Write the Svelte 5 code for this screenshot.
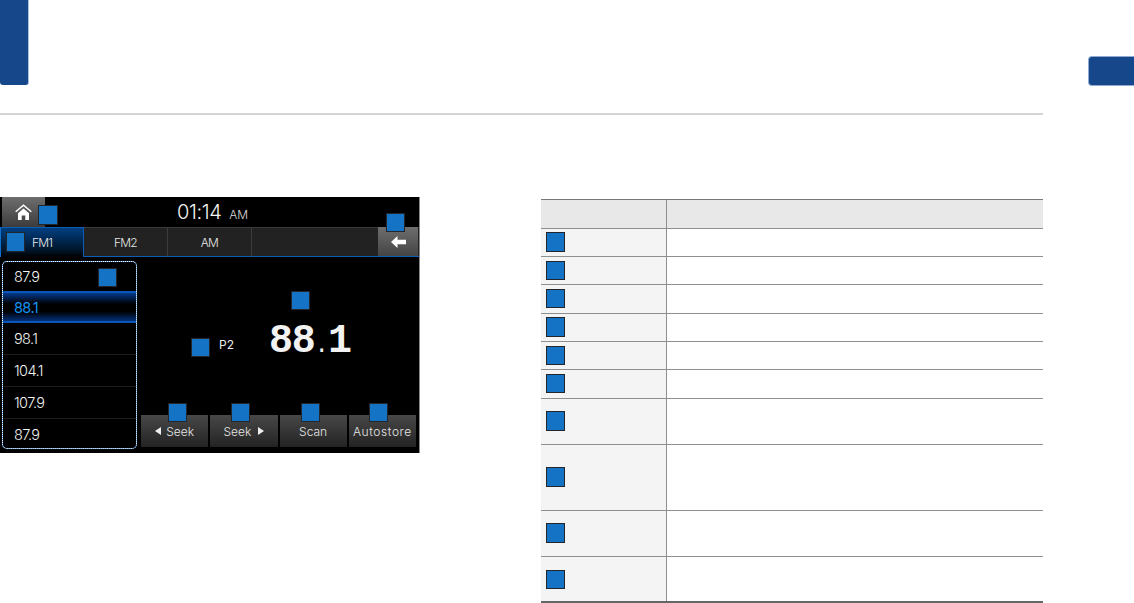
<script>
  const presets = [
    { f: '87.9', cls: 'first' },
    { f: '88.1', cls: 'sel' },
    { f: '98.1', cls: '' },
    { f: '104.1', cls: '' },
    { f: '107.9', cls: '' },
    { f: '87.9', cls: 'last' }
  ];
  const rows = [
    { h: 'r28', b: '' }, { h: 'r28', b: 'short' }, { h: 'r29', b: 'short' },
    { h: 'r28', b: '' }, { h: 'r28', b: 'short' }, { h: 'r29', b: 'short' },
    { h: 'r46', b: '' }, { h: 'r66', b: '' }, { h: 'r46', b: '' }, { h: 'r44', b: 'short' }
  ];
</script>

<div class="page">
  <header class="head">
    <div class="chapter"></div>
  </header>
  <div class="sidetab"></div>

  <main class="content">
    <section class="screen">
      <div class="topbar">
        <div class="home">
          <svg width="17" height="16" viewBox="0 0 17 16">
            <path d="M.7 7.800 8.500 1.200l7.800 6.600" fill="none" stroke="#fff" stroke-width="1.500"/>
            <path d="M3 9.300 8.500 4.600 14 9.300V16h-3.700v-4.500H6.700V16H3z" fill="#fff"/>
          </svg>
        </div>
        <div class="clock"><span class="time">01:14</span><span class="ampm">AM</span></div>
      </div>

      <div class="tabs">
        <div class="tab active">FM1</div>
        <div class="tab">FM2</div>
        <div class="tab">AM</div>
        <div class="tab spacer"></div>
        <div class="back">
          <svg width="15" height="12" viewBox="0 0 15 12">
            <path d="M0 6 6.500 0v3.800H15v4.400H6.500V12z" fill="#fff"/>
          </svg>
        </div>
      </div>

      <div class="main">
        <ul class="list">
          {#each presets as p}
            <li class={p.cls}>{p.f}</li>
          {/each}
        </ul>
        <div class="panel">
          <div class="tuned">
            <span class="preset">P2</span>
            <span class="freq">88<span class="dot">.</span>1</span>
          </div>
          <div class="buttons">
            <div class="btn">
              <svg width="6" height="8" viewBox="0 0 6 8"><path d="M0 4 6 0v8z" fill="#eee"/></svg>
              <span>Seek</span>
            </div>
            <div class="btn next">
              <span>Seek</span>
              <svg width="6" height="8" viewBox="0 0 6 8"><path d="M6 4 0 0v8z" fill="#eee"/></svg>
            </div>
            <div class="btn">Scan</div>
            <div class="btn wide">Autostore</div>
          </div>
        </div>
      </div>

      <i class="badge b-home"></i>
      <i class="badge b-tab"></i>
      <i class="badge b-list"></i>
      <i class="badge b-back"></i>
      <i class="badge b-freq"></i>
      <i class="badge b-preset"></i>
      <i class="badge b-seek1"></i>
      <i class="badge b-seek2"></i>
      <i class="badge b-scan"></i>
      <i class="badge b-auto"></i>
    </section>

    <section class="table">
      <div class="row hdr"><div class="c1"></div><div class="c2"></div></div>
      {#each rows as r}
        <div class="row {r.h}">
          <div class="c1"><i class="tbadge {r.b}"></i></div>
          <div class="c2"></div>
        </div>
      {/each}
    </section>
  </main>
</div>

<style>
  :global(body) { margin: 0; background: #fff; }
  .page {
    position: relative;
    width: 1134px;
    height: 603px;
    overflow: hidden;
    background: #fff;
    font-family: Inter, "Liberation Sans", sans-serif;
  }
  .head {
    width: 1043px;
    height: 113px;
    border-bottom: 2px solid #d4d4d4;
  }
  .chapter {
    width: 28px;
    height: 85px;
    background: #16478a;
    border-right: 1px solid #a9c0de;
    border-bottom-right-radius: 3px;
    border-bottom-left-radius: 3px;
  }
  .sidetab {
    position: absolute;
    left: 1089px;
    top: 57px;
    width: 45px;
    height: 28px;
    background: #16478a;
    border-radius: 3px 0 0 3px;
    box-shadow: 0 0 0 1px #8fabd2;
  }
  .content {
    display: flex;
    align-items: flex-start;
    padding-top: 82px;
  }
  .screen {
    position: relative;
    width: 419px;
    height: 256px;
    background: #000;
    border-right: 1px solid #8a8a8a;
    color: #eee;
    flex: none;
  }
  .topbar {
    display: flex;
    height: 30px;
  }
  .home {
    width: 43px;
    margin-left: 2px;
    display: flex;
    align-items: center;
    justify-content: center;
    padding-right: 1px;
    box-sizing: border-box;
    background: linear-gradient(#6e6e6e, #3c3c3c);
  }
  .clock {
    margin-left: 132px;
    display: flex;
    align-items: baseline;
    line-height: 30px;
    font-weight: 300;
  }
  .time { font-size: 20px; letter-spacing: -0.4px; color: #f4f4f4; }
  .ampm { font-size: 12px; margin-left: 8px; letter-spacing: -0.2px; color: #ddd; }
  .tabs {
    display: flex;
    height: 30px;
  }
  .tab {
    width: 84px;
    box-sizing: border-box;
    background: #232223;
    border-right: 1px solid #3c3c3c;
    border-top: 1px solid #3a3a3a;
    border-bottom: 1px solid #0d5db5;
    display: flex;
    align-items: center;
    justify-content: center;
    font-size: 12px;
    font-weight: 300;
    letter-spacing: -0.8px;
    color: #e8e8e8;
  }
  .tab.active {
    background: linear-gradient(#003f80, #001326 80%, #000);
    border-top: 1px solid #0d5db5;
    border-left: 1px solid #0d6fd0;
    border-right: 1px solid #0d5db5;
    border-bottom: none;
  }
  .tab.spacer { flex: 1; border-right: none; }
  .back {
    width: 41px;
    box-sizing: border-box;
    display: flex;
    align-items: center;
    justify-content: center;
    background: linear-gradient(#6e6e6e, #444);
    border-bottom: 1px solid #0d5db5;
    box-shadow: inset -1px 0 0 #232223;
  }
  .main {
    display: flex;
    height: 196px;
  }
  .list {
    list-style: none;
    margin: 4px 0 0 2px;
    padding: 0;
    width: 135px;
    height: 188px;
    box-sizing: border-box;
    border: 1px dotted #fff;
    border-radius: 5px;
    background: linear-gradient(#000, #000) padding-box, #3a86d0 border-box;
    overflow: hidden;
    flex: none;
  }
  .list li {
    height: 32px;
    box-sizing: border-box;
    padding-left: 11px;
    display: flex;
    align-items: center;
    font-size: 14.5px;
    font-weight: 300;
    letter-spacing: -0.6px;
    color: #f2f2f2;
    border-bottom: 1px solid #1c1c1c;
  }
  .list li.first { height: 29px; border-bottom: none; }
  .list li.last { height: 30px; border-bottom: none; }
  .list li.sel {
    color: #1392f5;
    font-weight: 400;
    border-top: 2px solid #0b55b8;
    border-bottom: 2px solid #0b55b8;
    background: linear-gradient(#023a8c, #000 40%, #000 66%, #02307a);
  }
  .panel {
    flex: 1;
    display: flex;
    flex-direction: column;
    margin-left: 4px;
  }
  .tuned {
    flex: 1;
    display: flex;
    align-items: center;
    padding: 2px 0 0 78px;
  }
  .preset { font-size: 12px; font-weight: 400; color: #eee; width: 50px; padding-top: 14px; }
  .freq {
    font-family: "Liberation Mono", monospace;
    font-size: 40px;
    font-weight: 700;
    letter-spacing: -1.2px;
    line-height: 40px;
    padding-top: 13px;
    color: #f2f2f2;
  }
  .dot {
    font-weight: 400;
    font-size: 24px;
    letter-spacing: -1px;
  }
  .buttons {
    display: flex;
    gap: 2px;
    height: 32px;
    margin-bottom: 6px;
    width: 275px;
  }
  .btn {
    flex: 1;
    display: flex;
    align-items: center;
    justify-content: center;
    gap: 5px;
    background: linear-gradient(#484848, #232323);
    font-size: 12px;
    font-weight: 300;
    color: #e6e6e6;
    box-sizing: border-box;
  }
  .btn.next { gap: 7px; }
  .btn.wide { letter-spacing: 0.6px; }
  .badge {
    position: absolute;
    width: 19px;
    height: 19px;
    box-sizing: border-box;
    background: #1473c4;
    border: 1px solid #22262b;
  }
  .b-home { left: 38px; top: 8px; height: 20px; width: 20px; }
  .b-tab { left: 6px; top: 35px; height: 20px; }
  .b-list { left: 98px; top: 71px; }
  .b-back { left: 386px; top: 16px; }
  .b-freq { left: 291px; top: 94px; }
  .b-preset { left: 191px; top: 141px; }
  .b-seek1 { left: 168px; top: 206px; }
  .b-seek2 { left: 231px; top: 206px; }
  .b-scan { left: 301px; top: 206px; }
  .b-auto { left: 369px; top: 206px; }

  .table {
    width: 502px;
    margin: 2px 0 0 121px;
    border-top: 1px solid #777;
    border-bottom: 2px solid #666;
    flex: none;
  }
  .row {
    display: flex;
    box-sizing: border-box;
    border-bottom: 1px solid #8f8f8f;
  }
  .row:last-child { border-bottom: none; }
  .hdr { height: 29px; background: #e8e8e8; }
  .r28 { height: 28px; }
  .r29 { height: 29px; }
  .r44 { height: 44px; }
  .r46 { height: 46px; }
  .r66 { height: 66px; }
  .c1 {
    width: 126px;
    box-sizing: border-box;
    padding-left: 5px;
    background: #f4f4f4;
    border-right: 1px solid #8f8f8f;
    display: flex;
    align-items: center;
  }
  .hdr .c1 { background: #e8e8e8; }
  .c2 { flex: 1; }
  .tbadge {
    display: block;
    width: 19px;
    height: 20px;
    margin-bottom: 1px;
    box-sizing: border-box;
    background: #1473c4;
    border: 1px solid #22262b;
  }
  .tbadge.short { height: 19px; margin-bottom: 0; }
  .r29 .tbadge.short { margin-bottom: 1px; }
  .r44 .tbadge.short { margin-top: 1px; }
</style>
